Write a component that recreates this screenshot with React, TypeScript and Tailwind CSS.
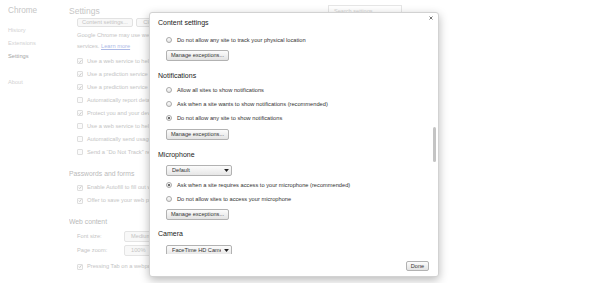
import type { ReactNode } from 'react'

function BgCheck({ on, children }: { on?: boolean; children: ReactNode }) {
  return (
    <div className="flex h-[13px] items-center">
      <span className="flex h-[6px] w-[6px] shrink-0 items-center justify-center rounded-[1px] border border-[#dedede] bg-[#fbfbfb]">
        {on && (
          <svg viewBox="0 0 10 10" className="h-[7px] w-[7px]">
            <path d="M2 5.2 L4.3 7.6 L8.6 1.8" fill="none" stroke="#b8b8b8" strokeWidth="1.7" />
          </svg>
        )}
      </span>
      <span className="ml-[4px] whitespace-nowrap">{children}</span>
    </div>
  )
}

function Radio({ on, label, className = '' }: { on?: boolean; label: string; className?: string }) {
  return (
    <div className={`ml-[8px] flex h-[14px] items-center ${className}`}>
      <span className="flex h-[6px] w-[6px] shrink-0 items-center justify-center rounded-full border border-[#a9a9a9] bg-linear-to-b from-white to-[#e4e4e4]">
        {on && <span className="h-[2px] w-[2px] rounded-full bg-[#3c3c3c]" />}
      </span>
      <span className="ml-[5px] whitespace-nowrap text-[5.7px] text-[#333]">{label}</span>
    </div>
  )
}

function ManageButton({ className = '' }: { className?: string }) {
  return (
    <div
      className={`ml-[8px] flex h-[11px] w-[63px] items-center justify-center rounded-[2px] border border-[#b2b2b2] bg-linear-to-b from-[#fcfcfc] to-[#e3e3e3] text-[5.6px] text-[#333] ${className}`}
    >
      Manage exceptions...
    </div>
  )
}

function Select({ value, className = '' }: { value: string; className?: string }) {
  return (
    <div
      className={`ml-[8px] flex h-[11px] w-[66px] items-center gap-[3px] rounded-[2px] border border-[#b2b2b2] bg-linear-to-b from-[#fcfcfc] to-[#e6e6e6] pl-[5px] pr-[2px] text-[5.6px] text-[#333] ${className}`}
    >
      <span className="min-w-0 flex-1 overflow-hidden whitespace-nowrap">{value}</span>
      <svg viewBox="0 0 8 5" className="h-[3px] w-[5px] shrink-0">
        <path d="M0 0 H8 L4 5 Z" fill="#222" />
      </svg>
    </div>
  )
}

function Heading({ children, className = '' }: { children: ReactNode; className?: string }) {
  return <div className={`flex h-[14px] items-center text-[7px] text-[#222] ${className}`}>{children}</div>
}

export default function App() {
  return (
    <div className="relative h-[283px] w-[590px] overflow-hidden bg-white font-['Liberation_Sans',Arial,sans-serif]">
      {/* faded settings page behind the overlay */}
      <div className="flex">
        <aside className="w-[69px] shrink-0 pl-[8px] pt-[6px] text-[5.7px] text-[#d2d2d2]">
          <div className="h-[10px] text-[8.2px] leading-[10px] text-[#c6c6c6]">Chrome</div>
          <div className="mt-[7.5px] leading-[13.3px]">History</div>
          <div className="leading-[13.3px]">Extensions</div>
          <div className="leading-[13.3px] text-[#a4a4a4]">Settings</div>
          <div className="mt-[13px] leading-[13.3px]">About</div>
        </aside>

        <main className="w-[333px] shrink-0 pt-[6px] text-[5.7px] text-[#c4c4c4]">
          <div className="flex h-[10px] items-center justify-between">
            <span className="text-[8.5px] text-[#c6c6c6]">Settings</span>
            <div className="flex h-[12px] w-[74px] items-center border border-[#e6e6e6] pl-[5px] text-[5.6px] text-[#d6d6d6]">
              Search settings
            </div>
          </div>

          <div className="w-[80px] overflow-hidden">
            <div className="pl-[8px]">
              <div className="mt-[2px] flex gap-[3px]">
                <div className="flex h-[9px] w-[56px] shrink-0 items-center justify-center rounded-[2px] border border-[#e2e2e2] bg-[#f8f8f8]">
                  Content settings...
                </div>
                <div className="flex h-[9px] w-[70px] shrink-0 items-center justify-center rounded-[2px] border border-[#e2e2e2] bg-[#f8f8f8]">
                  Clear browsing data...
                </div>
              </div>

              <div className="mt-[3px] whitespace-nowrap leading-[10.5px]">
                Google Chrome may use web services to improve your browsing experience.
              </div>
              <div className="whitespace-nowrap leading-[10.5px]">
                services. <span className="text-[#adbae6] underline">Learn more</span>
              </div>

              <div className="mt-[3.5px]">
                <BgCheck on>Use a web service to help resolve navigation errors</BgCheck>
                <BgCheck on>Use a prediction service to help complete searches</BgCheck>
                <BgCheck on>Use a prediction service to load pages more quickly</BgCheck>
                <BgCheck>Automatically report details of possible security incidents</BgCheck>
                <BgCheck on>Protect you and your device from dangerous sites</BgCheck>
                <BgCheck>Use a web service to help resolve spelling errors</BgCheck>
                <BgCheck>Automatically send usage statistics and crash reports</BgCheck>
                <BgCheck>Send a &ldquo;Do Not Track&rdquo; request with your browsing traffic</BgCheck>
              </div>
            </div>

            <div className="mt-[10px] h-[9px] whitespace-nowrap text-[6.8px] leading-[9px] text-[#bababa]">
              Passwords and forms
            </div>
            <div className="mt-[3.5px] pl-[8px]">
              <BgCheck on>Enable Autofill to fill out web forms in a single click</BgCheck>
              <BgCheck on>Offer to save your web passwords</BgCheck>
            </div>

            <div className="mt-[10px] h-[9px] text-[6.8px] leading-[9px] text-[#bababa]">Web content</div>
            <div className="mt-[3px] pl-[8px]">
              <div className="flex h-[14px] items-center">
                <span className="w-[47px] shrink-0">Font size:</span>
                <div className="flex h-[11px] w-[60px] shrink-0 items-center rounded-[2px] border border-[#e4e4e4] bg-[#f8f8f8] pl-[6px]">
                  Medium
                </div>
              </div>
              <div className="flex h-[14px] items-center">
                <span className="w-[47px] shrink-0">Page zoom:</span>
                <div className="flex h-[11px] w-[60px] shrink-0 items-center rounded-[2px] border border-[#e4e4e4] bg-[#f8f8f8] pl-[6px]">
                  100%
                </div>
              </div>
              <div className="mt-[3px]">
                <BgCheck on>Pressing Tab on a webpage highlights links, as well as form fields</BgCheck>
              </div>
            </div>
          </div>
        </main>
      </div>

      {/* Content settings dialog */}
      <div className="absolute left-[149px] top-[12px] flex h-[265px] w-[290px] flex-col rounded-[3px] border border-[#d2d2d2] bg-white shadow-[0_3px_10px_rgba(0,0,0,0.28)]">
        <div className="h-[20px] pl-[8px] pt-[4.5px] text-[7px] leading-[9px] text-[#222]">Content settings</div>

        <svg viewBox="0 0 8 8" className="absolute right-[5px] top-[3px] h-[4px] w-[4px]">
          <path d="M1 1 L7 7 M7 1 L1 7" stroke="#666" strokeWidth="1.8" />
        </svg>

        <div className="h-[221px] overflow-hidden pl-[8px]">
          <Radio label="Do not allow any site to track your physical location" />
          <ManageButton className="mt-[3px]" />

          <Heading className="mt-[8px]">Notifications</Heading>
          <Radio label="Allow all sites to show notifications" />
          <Radio label="Ask when a site wants to show notifications (recommended)" />
          <Radio on label="Do not allow any site to show notifications" />
          <ManageButton className="mt-[4px]" />

          <Heading className="mt-[8px]">Microphone</Heading>
          <Select value="Default" className="mt-[3px]" />
          <Radio on label="Ask when a site requires access to your microphone (recommended)" className="mt-[2px]" />
          <Radio label="Do not allow sites to access your microphone" />
          <ManageButton className="mt-[3px]" />

          <Heading className="mt-[7px]">Camera</Heading>
          <Select value="FaceTime HD Camera" className="mt-[4px]" />
        </div>

        <div className="flex flex-1 items-end justify-end pb-[5px] pr-[9px]">
          <div className="flex h-[10px] w-[23px] items-center justify-center rounded-[2px] border border-[#b2b2b2] bg-linear-to-b from-[#fcfcfc] to-[#e3e3e3] text-[5.6px] text-[#333]">
            Done
          </div>
        </div>

        <div className="absolute right-[2px] top-[114px] h-[35px] w-[3px] rounded-full bg-[#c4c4c4]" />
      </div>
    </div>
  )
}
